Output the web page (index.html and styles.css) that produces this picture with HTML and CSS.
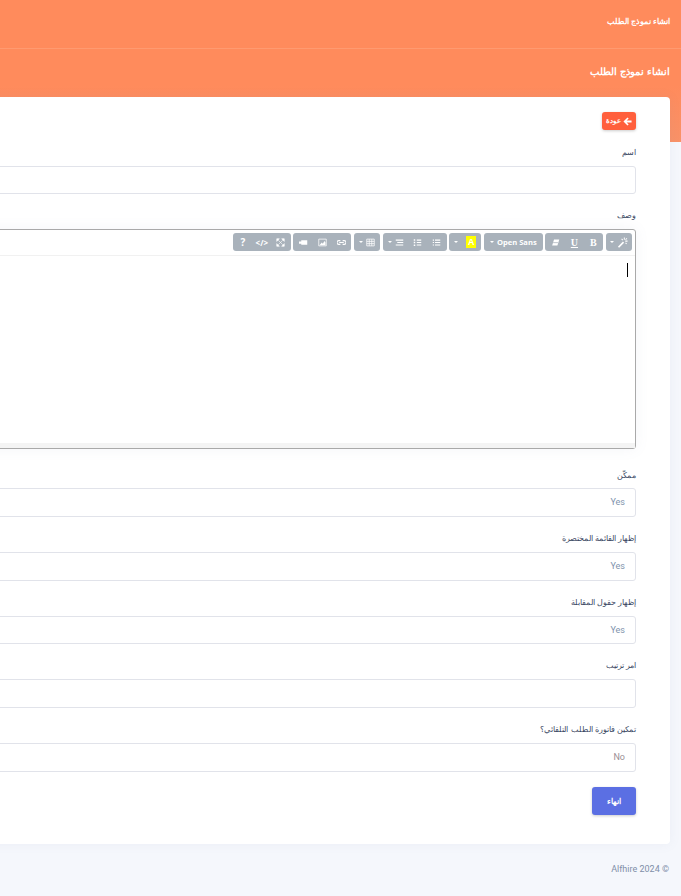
FILE: index.html
```html
<!DOCTYPE html>
<html lang="ar" dir="rtl">
<head>
<meta charset="utf-8">
<title>انشاء نموذج الطلب</title>
<link rel="stylesheet" href="styles.css">
</head>
<body>
<header class="hero">
  <div class="topbar">انشاء نموذج الطلب</div>
  <h1 class="page-title">انشاء نموذج الطلب</h1>
</header>
<main class="content">
  <section class="card">
    <a class="back-btn"><svg class="back-icon" viewBox="0 0 10 10"><path d="M5 .5.500 5 5 9.500l1.300-1.300L4.100 6H9.500V4H4.100L6.300 1.800z" fill="#fff"/></svg>عودة</a>
    <form class="form">
      <div class="field field-name">
        <label class="label">اسم</label>
        <div class="control"></div>
      </div>
      <div class="field field-desc">
        <label class="label">وصف</label>
        <div class="editor">
          <div class="toolbar">
            <div class="group"><span class="tool tool-w"><svg class="ic ic-wand" viewBox="0 0 12 12"><path d="M1 10.500 6.500 5l1.300 1.300L2.300 11.800z" fill="#fff"/><path d="M8 .5v2.500M11.500 4.500H9M5 2l1.300 1.300M10.800 1.500 9.300 3M10.500 7.500 9.300 6.500" stroke="#fff" stroke-width="1.100"/></svg><i class="caret"></i></span></div>
            <div class="group">
              <span class="tool tool-serif">B</span>
              <span class="tool tool-serif tool-u">U</span>
              <span class="tool"><svg class="ic" viewBox="0 0 12 12"><path d="M4 2h7L8.500 10H1.500z" fill="#fff"/><path d="M2.800 6.200h6.500" stroke="#a9b2bb" stroke-width="1"/></svg></span>
            </div>
            <div class="group"><span class="tool tool-font"><i class="caret"></i>Open Sans</span></div>
            <div class="group">
              <span class="tool"><span class="hilite">A</span></span>
              <span class="tool tool-caret"><i class="caret"></i></span>
            </div>
            <div class="group">
              <span class="tool"><svg class="ic" viewBox="0 0 12 12"><path d="M4 2h7v1.500H4zM4 5.200h7v1.500H4zM4 8.500h7V10H4zM1 2h1.700v1.500H1zM1 5.200h1.700v1.500H1zM1 8.500h1.700V10H1z" fill="#fff"/></svg></span>
              <span class="tool"><svg class="ic" viewBox="0 0 12 12"><path d="M5 2h6v1.500H5zM5 5.200h6v1.500H5zM5 8.500h6V10H5zM1 1.500h2v2H1zM1 5h2v2H1zM1 8.500h2v2H1z" fill="#fff"/></svg></span>
              <span class="tool tool-w"><svg class="ic" viewBox="0 0 12 12"><path d="M1 2h10v1.500H1zM3 5.200h8v1.500H3zM1 8.500h10V10H1z" fill="#fff"/></svg><i class="caret"></i></span>
            </div>
            <div class="group"><span class="tool tool-w"><svg class="ic" viewBox="0 0 12 12"><path d="M1 1.500h10v9H1zM1 4.500h10M1 7.500h10M4.300 1.500v9M7.700 1.500v9" stroke="#fff" fill="none"/></svg><i class="caret"></i></span></div>
            <div class="group">
              <span class="tool"><svg class="ic" viewBox="0 0 12 12"><path d="M4.500 3.500h-2a2.500 2.500 0 0 0 0 5h2M7.500 3.500h2a2.500 2.500 0 0 1 0 5h-2M3 6h6" fill="none" stroke="#fff" stroke-width="1.500"/></svg></span>
              <span class="tool"><svg class="ic" viewBox="0 0 12 12"><path d="M1 1.500h10v9H1z" fill="none" stroke="#fff"/><path d="M2 9.500 5 6l1.500 1.500L8.500 4 10 6v3.500z" fill="#fff"/></svg></span>
              <span class="tool"><svg class="ic" viewBox="0 0 12 12"><path d="M3 3h8v6H3zM0 4.500h3v3H0z" fill="#fff"/></svg></span>
            </div>
            <div class="group">
              <span class="tool"><svg class="ic" viewBox="0 0 12 12"><path d="M1 1h3.500L1 4.500zM11 1H7.500L11 4.500zM1 11h3.500L1 7.500zM11 11H7.500L11 7.500zM3 3l6 6M9 3 3 9" fill="#fff" stroke="#fff" stroke-width=".8"/></svg></span>
              <span class="tool tool-code" dir="ltr">&lt;/&gt;</span>
              <span class="tool tool-help">?</span>
            </div>
          </div>
          <div class="editable"><span class="cursor"></span></div>
          <div class="statusbar"></div>
        </div>
      </div>
      <div class="field field-switch">
        <label class="label">ممكّن</label>
        <div class="control control-value">Yes</div>
      </div>
      <div class="field field-select">
        <label class="label">إظهار القائمة المختصرة</label>
        <div class="control control-value">Yes</div>
      </div>
      <div class="field field-select">
        <label class="label">إظهار حقول المقابلة</label>
        <div class="control control-value">Yes</div>
      </div>
      <div class="field field-select">
        <label class="label">امر ترتيب</label>
        <div class="control control-value"></div>
      </div>
      <div class="field field-select">
        <label class="label">تمكين فاتورة الطلب التلقائي؟</label>
        <div class="control control-value control-no">No</div>
      </div>
      <button class="submit" type="button">انهاء</button>
    </form>
  </section>
</main>
<footer class="footer"><span dir="ltr">Alfhire 2024 ©</span></footer>
</body>
</html>
```
FILE: styles.css
```css
* { box-sizing: border-box; }
html, body { margin: 0; height: 100%; overflow: hidden; }
body {
  background: #f5f7fc;
  font-family: "Liberation Sans", sans-serif;
  color: #3b4863;
}
.hero { height: 142px; background: linear-gradient(180deg, #ff8b5c 0%, #ff8b5c 60%, #f99268 100%); }
.topbar {
  height: 49px;
  padding: 16px 11px 0 0;
  border-bottom: 1px solid #ff9a70;
  color: #fff;
  font-size: 8px;
  font-weight: 700;
  line-height: 12px;
}
.page-title {
  margin: 0;
  padding: 15px 11px 0 0;
  color: #fff;
  font-size: 10px;
  font-weight: 700;
  line-height: 16px;
}
.content { display: flex; margin-top: -45px; padding-right: 11px; }
.card {
  flex: 0 0 1000px;
  height: 747px;
  padding: 15px 34px 0 0;
  background: #fff;
  border-radius: 4px;
  box-shadow: 0 0 12px rgba(120, 130, 170, .08);
}
.back-btn {
  display: flex;
  align-items: center;
  justify-content: center;
  gap: 2px;
  width: 34px;
  height: 18px;
  background: #ff5f3c;
  border-radius: 3px;
  color: #fff;
  font-size: 7px;
  font-weight: 700;
  box-shadow: 0 1px 3px rgba(0, 0, 0, .2);
}
.back-icon { width: 9px; height: 9px; }
.form { display: block; }
.label { display: block; font-size: 8px; line-height: 12px; color: #3b4863; }
.field-name { margin-top: 17px; }
.field-name .label { margin-bottom: 7px; }
.field-desc { margin-top: 16px; }
.field-desc .label { margin-bottom: 7px; }
.field-switch { margin-top: 21px; }
.field-switch .label { margin-bottom: 6px; }
.field-select { margin-top: 16px; }
.field-select .label { margin-bottom: 7px; }
.control {
  height: 28px;
  background: #fff;
  border: 1px solid #e1e3ea;
  border-radius: 3px;
  font-size: 9px;
  line-height: 26px;
  padding-right: 10px;
}
.control-value { height: 28.750px; line-height: 26px; color: #7f93ad; font-family: Roboto, sans-serif; }
.control-no { color: #9a8f95; }
.editor {
  display: flex;
  flex-direction: column;
  height: 220px;
  border: 1px solid #a9a9a9;
  border-radius: 3px;
  box-shadow: 0 0 14px rgba(120, 130, 170, .08);
}
.toolbar {
  display: flex;
  gap: 2.600px;
  height: 26px;
  padding: 3px 3px 0 0;
  border-bottom: 1px solid #f1f1f1;
}
.group {
  display: flex;
  align-items: center;
  height: 18px;
  padding: 0 .5px;
  background: #a9b2bb;
  border-radius: 3px;
}
.tool {
  display: flex;
  align-items: center;
  justify-content: center;
  gap: 3px;
  width: 19px;
  height: 18px;
  color: #fff;
  font-size: 8px;
  font-weight: 700;
}
.tool-w { width: 25px; }
.tool-font {
  width: 58px;
  font-family: "Open Sans", sans-serif;
  font-size: 7.600px;
  direction: ltr;
  white-space: nowrap;
}
.tool-caret { width: 12px; }
.tool-code { font-family: "Open Sans", sans-serif; font-size: 8px; }
.tool-help { font-family: "Open Sans", sans-serif; font-size: 10px; }
.tool-serif { font-family: "Liberation Serif", serif; font-size: 10px; }
.tool-u { text-decoration: underline; }
.ic { width: 9px; height: 9px; flex: none; }
.ic-wand { width: 11px; height: 11px; }
.caret {
  width: 0;
  height: 0;
  flex: none;
  border-top: 2px solid #fff;
  border-left: 2px solid transparent;
  border-right: 2px solid transparent;
}
.hilite {
  display: block;
  width: 10px;
  height: 12px;
  background: #ffff00;
  color: #fff;
  font-family: "Liberation Sans", sans-serif;
  font-size: 9px;
  line-height: 12px;
  text-align: center;
}
.editable { flex: 1; padding: 7px 7px 0 0; }
.cursor { display: block; width: 1px; height: 14px; background: #000; }
.statusbar { height: 5px; background: #f4f4f4; }
.submit {
  display: block;
  width: 44px;
  height: 28px;
  margin-top: 15.250px;
  padding: 0;
  border: 0;
  border-radius: 3px;
  background: #5b6fe3;
  color: #fff;
  font-family: inherit;
  font-size: 8px;
  font-weight: 700;
  box-shadow: 0 1px 3px rgba(0, 0, 0, .2);
}
.footer {
  margin-top: 18px;
  padding-right: 12px;
  font-family: Roboto, sans-serif;
  font-size: 9px;
  line-height: 14px;
  color: #7f8ea8;
}
```
